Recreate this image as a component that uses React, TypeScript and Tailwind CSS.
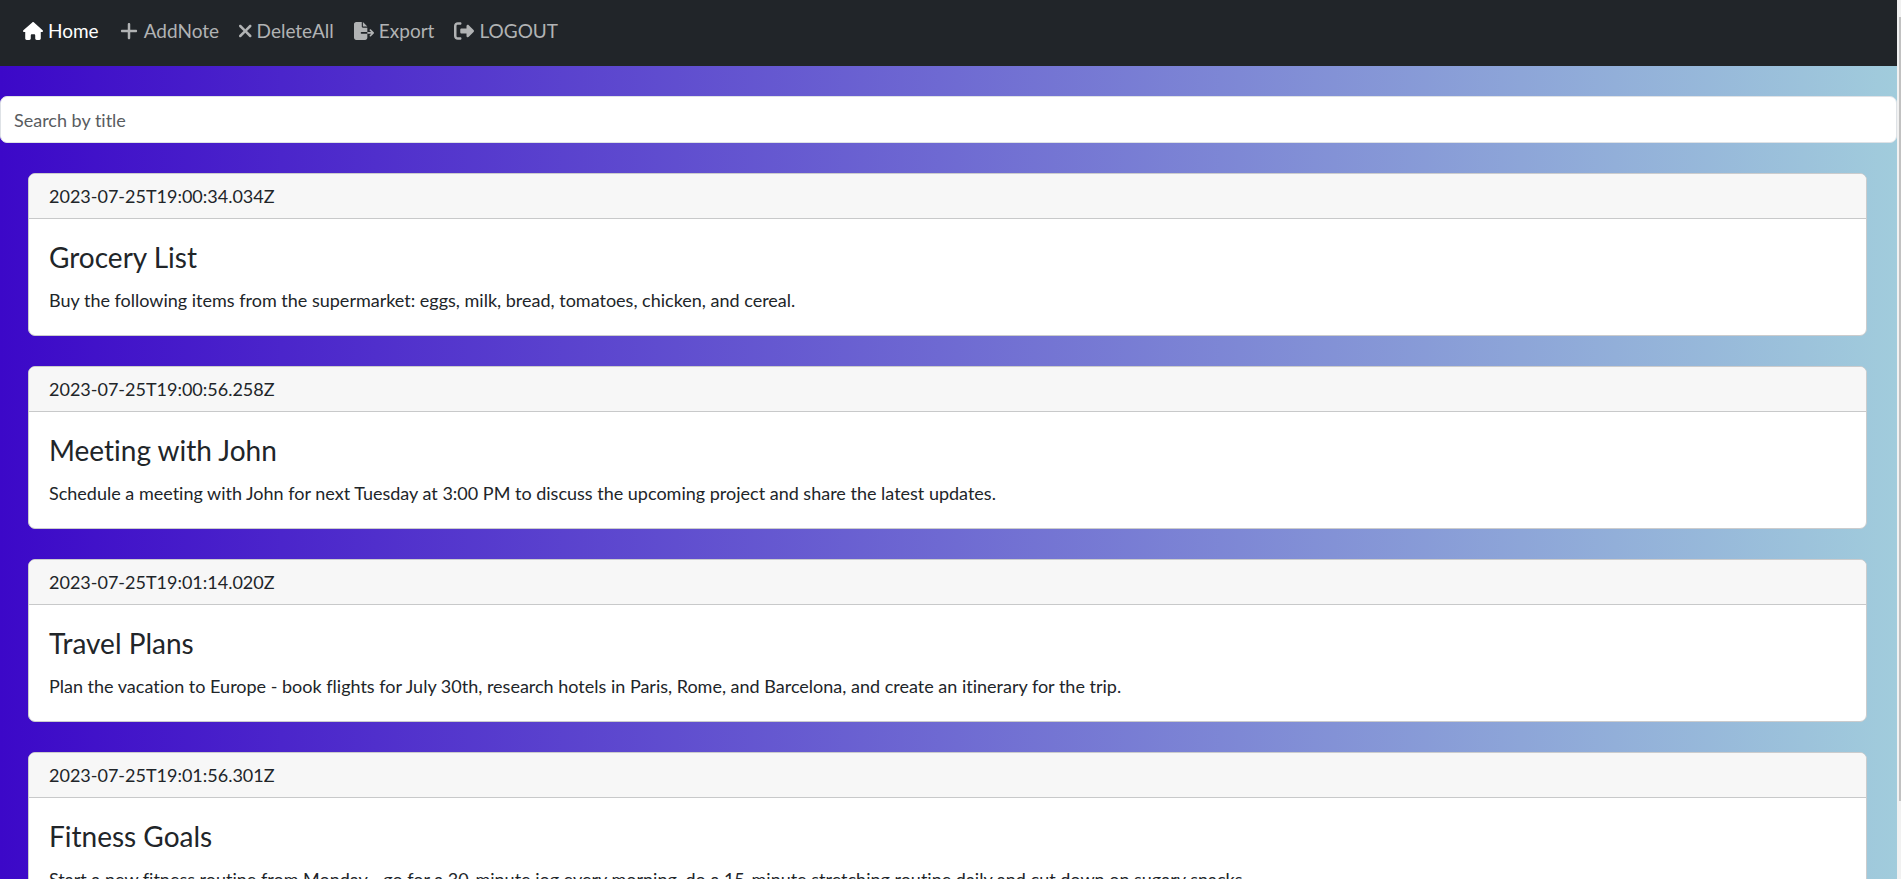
import type { ComponentType, SVGProps } from "react";
import { FaHouse, FaPlus, FaFileExport, FaRightFromBracket } from "react-icons/fa6";

type NavItem = { label: string; icon: ComponentType<SVGProps<SVGSVGElement>>; active?: boolean };
type Note = { date: string; title: string; body: string };

function CrossIcon(props: SVGProps<SVGSVGElement>) {
  return (
    <svg viewBox="0 0 320 512" fill="currentColor" {...props}>
      <path d="M310.6 150.6c12.5-12.5 12.5-32.8 0-45.3s-32.8-12.5-45.3 0L160 210.7 54.6 105.4c-12.5-12.5-32.8-12.5-45.3 0s-12.5 32.8 0 45.3L114.7 256 9.4 361.4c-12.5 12.5-12.5 32.8 0 45.3s32.8 12.5 45.3 0L160 301.3 265.4 406.6c12.5 12.5 32.8 12.5 45.3 0s12.5-32.8 0-45.3L205.3 256 310.6 150.6z" />
    </svg>
  );
}

const navItems: NavItem[] = [
  { label: "Home", icon: FaHouse, active: true },
  { label: "AddNote", icon: FaPlus },
  { label: "DeleteAll", icon: CrossIcon },
  { label: "Export", icon: FaFileExport },
  { label: "LOGOUT", icon: FaRightFromBracket },
];

const notes: Note[] = [
  {
    date: "2023-07-25T19:00:34.034Z",
    title: "Grocery List",
    body: "Buy the following items from the supermarket: eggs, milk, bread, tomatoes, chicken, and cereal.",
  },
  {
    date: "2023-07-25T19:00:56.258Z",
    title: "Meeting with John",
    body: "Schedule a meeting with John for next Tuesday at 3:00 PM to discuss the upcoming project and share the latest updates.",
  },
  {
    date: "2023-07-25T19:01:14.020Z",
    title: "Travel Plans",
    body: "Plan the vacation to Europe - book flights for July 30th, research hotels in Paris, Rome, and Barcelona, and create an itinerary for the trip.",
  },
  {
    date: "2023-07-25T19:01:56.301Z",
    title: "Fitness Goals",
    body: "Start a new fitness routine from Monday - go for a 30-minute jog every morning, do a 15-minute stretching routine daily and cut down on sugary snacks.",
  },
];

function Navbar() {
  return (
    <nav className="flex h-[66px] shrink-0 items-center gap-5 bg-[#212529] px-[23px] pb-1">
      {navItems.map(({ label, icon: Icon, active }) => (
        <a
          key={label}
          href="#"
          className={`flex items-center gap-[5px] text-[19px] leading-[30px] ${active ? "text-white" : "text-[#b1b3b4]"}`}
        >
          <Icon aria-hidden="true" className="h-5 w-auto" />
          {label}
        </a>
      ))}
    </nav>
  );
}

function NoteCard({ note }: { note: Note }) {
  return (
    <article className="shrink-0 overflow-hidden rounded-[7px] border border-[#cbcccd] bg-white text-[#212529]">
      <header className="border-b border-[#c8c9ca] bg-[#f7f7f7] px-5 py-2 text-[18px] leading-7">{note.date}</header>
      <div className="px-5 py-5">
        <h2 className="mb-2.5 text-[28px] leading-9">{note.title}</h2>
        <p className="text-[18px] leading-[30px]">{note.body}</p>
      </div>
    </article>
  );
}

export default function App() {
  return (
    <div className="flex h-screen overflow-hidden font-['Gill_Sans','Gill_Sans_MT',Lato,sans-serif] [font-variant-ligatures:none]">
      <div className="flex min-w-0 flex-1 flex-col overflow-hidden bg-linear-to-r/srgb from-[#3c08c8] to-[#a1ccdc]">
        <Navbar />
        <main className="flex flex-col">
          <input
            type="search"
            aria-label="Search by title"
            placeholder="Search by title"
            className="mt-[30px] h-[47px] w-full rounded-[7px] border border-[#dee2e6] bg-white px-[13px] text-[18px] text-[#212529] placeholder:text-[#595c5f] placeholder:opacity-100"
          />
          <section aria-label="Notes" className="mt-[30px] mr-[30px] ml-7 flex flex-col gap-[30px]">
            {notes.map((note) => (
              <NoteCard key={note.date} note={note} />
            ))}
          </section>
        </main>
      </div>
      <div aria-hidden="true" className="w-1 shrink-0 bg-[#f1f1f1] pt-[17px] pl-[2px]">
        <div className="h-[91%] bg-[#c1c1c1]" />
      </div>
    </div>
  );
}
